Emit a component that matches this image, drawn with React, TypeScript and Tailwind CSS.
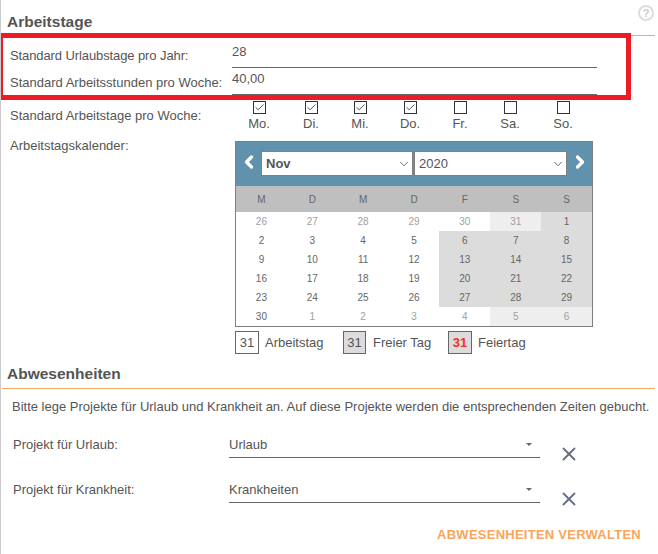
import { ChevronDown, ChevronLeft, ChevronRight, Check, X } from "lucide-react";

const days = [
  { label: "Mo.", checked: true, width: "w-[52px]" },
  { label: "Di.", checked: true, width: "w-[52px]" },
  { label: "Mi.", checked: true, width: "w-[46px]" },
  { label: "Do.", checked: true, width: "w-[54px]" },
  { label: "Fr.", checked: false, width: "w-[46px]" },
  { label: "Sa.", checked: false, width: "w-[54px]" },
  { label: "So.", checked: false, width: "w-[52px]" },
];

const weekHead = ["M", "D", "M", "D", "F", "S", "S"];

const weeks = [
  [26, 27, 28, 29, 30, 31, 1],
  [2, 3, 4, 5, 6, 7, 8],
  [9, 10, 11, 12, 13, 14, 15],
  [16, 17, 18, 19, 20, 21, 22],
  [23, 24, 25, 26, 27, 28, 29],
  [30, 1, 2, 3, 4, 5, 6],
];

function cellClass(week: number, col: number) {
  const outside = week === 0 ? col < 6 : week === 5 && col > 0;
  const weekend = col >= 5 || (col === 4 && !outside);
  let bg = "bg-white";
  if (weekend) bg = outside ? "bg-[#eeeeee]" : "bg-[#dcdcdc]";
  return `${bg} ${outside ? "text-[#a0a0a0]" : "text-[#666666]"}`;
}

function ProjectRow({ label, value }: { label: string; value: string }) {
  return (
    <div className="flex h-[45px] pl-[11px]">
      <div className="w-[216px] pt-[8px] text-[13px] leading-[20px]">{label}</div>
      <div className="relative h-[31px] w-[311px] border-b-[1.5px] border-[#666666] pt-[8px] text-[13px] leading-[20px]">
        {value}
        <span className="absolute right-[8px] top-[16px] h-0 w-0 border-x-[3px] border-t-[3px] border-x-transparent border-t-[#666666]" />
      </div>
      <X className="ml-[18px] mt-[16px] h-[22px] w-[22px] text-[#667080]" strokeWidth={2} />
    </div>
  );
}

export default function App() {
  return (
    <div
      className="relative h-[554px] w-[658px] overflow-hidden border-l border-[#cccccc] bg-white pl-px text-[#555555]"
      style={{ fontFamily: '"Liberation Sans", Arial, sans-serif' }}
    >
      <div className="absolute right-[4px] top-[5px] flex h-[16px] w-[16px] items-center justify-center rounded-full border-2 border-[#dddddd] text-[11px] font-bold leading-none text-[#cccccc]">
        ?
      </div>

      {/* Arbeitstage */}
      <div className="mr-[3px] h-[36px] border-b border-[#f0a860] pl-[5px] pt-[13px]">
        <h2 className="text-[15.5px] font-bold leading-[18px]">Arbeitstage</h2>
      </div>

      <div className="flex h-[32px] pl-[8px]">
        <div className="w-[222px] pt-[10px] text-[13px] leading-[20px] tracking-[-0.1px]">Standard Urlaubstage pro Jahr:</div>
        <div className="h-[32px] w-[365px] border-b border-[#666666] pt-[6px] text-[13px] leading-[20px]">28</div>
      </div>
      <div className="flex h-[27px] pl-[8px]">
        <div className="w-[222px] whitespace-nowrap pt-[5px] text-[13px] leading-[20px]">
          Standard Arbeitsstunden pro Woche:
        </div>
        <div className="h-[27px] w-[365px] border-b border-[#666666] pt-px text-[13px] leading-[20px]">40,00</div>
      </div>

      <div className="flex h-[46px] pl-[8px]">
        <div className="w-[223px] pt-[11px] text-[13px] leading-[20px]">Standard Arbeitstage pro Woche:</div>
        <div className="flex pt-[6px]">
          {days.map((d) => (
            <div key={d.label} className={`flex flex-col items-center ${d.width}`}>
              <div className="flex h-[13px] w-[13px] items-center justify-center border border-[#333333]">
                {d.checked && <Check className="h-[11px] w-[11px] text-[#444444]" strokeWidth={2} />}
              </div>
              <span className="text-[13px] leading-[20px]">{d.label}</span>
            </div>
          ))}
        </div>
      </div>

      <div className="flex pl-[8px]">
        <div className="-mt-[5px] w-[225px] text-[13px] leading-[20px]">Arbeitstagskalender:</div>
        <div>
          <div className="w-[358px] border border-[#7f7f7f]">
            <div className="flex h-[44px] items-start bg-[#6092ae] pl-[3px] pt-[9px]">
              <ChevronLeft className="mt-[1px] h-[20px] w-[20px] shrink-0 text-white" strokeWidth={4} />
              <div className="ml-[2px] flex h-[25px] w-[152px] shrink-0 items-center justify-between border border-[#7f7f7f] bg-white pl-[4px] pr-px text-[13px] font-bold">
                Nov
                <ChevronDown className="h-[14px] w-[14px]" strokeWidth={1.5} />
              </div>
              <div className="ml-px flex h-[25px] w-[153px] shrink-0 items-center justify-between border border-[#7f7f7f] bg-white pl-[4px] pr-px text-[13px]">
                2020
                <ChevronDown className="h-[14px] w-[14px]" strokeWidth={1.5} />
              </div>
              <ChevronRight className="ml-[3px] mt-[1px] h-[20px] w-[20px] shrink-0 text-white" strokeWidth={4} />
            </div>
            <div className="grid h-[26px] grid-cols-7 items-center bg-[#bfbfbf] text-center text-[10px] text-[#666666]">
              {weekHead.map((h, i) => (
                <span key={i}>{h}</span>
              ))}
            </div>
            {weeks.map((week, w) => (
              <div key={w} className="grid h-[19px] grid-cols-7 text-center text-[10px] leading-[19px]">
                {week.map((n, c) => (
                  <div key={c} className={cellClass(w, c)}>
                    {n}
                  </div>
                ))}
              </div>
            ))}
          </div>
          <div className="mt-[4px] flex h-[23px] items-center text-[13px]">
            <div className="flex h-[23px] w-[24px] items-center justify-center border border-[#666666]">31</div>
            <span className="ml-[6px] w-[78px]">Arbeitstag</span>
            <div className="flex h-[23px] w-[23px] items-center justify-center border border-[#666666] bg-[#dcdcdc]">31</div>
            <span className="ml-[7px] w-[75px]">Freier Tag</span>
            <div className="flex h-[23px] w-[24px] items-center justify-center border border-[#666666] bg-[#dcdcdc] font-bold text-[#f03030]">
              31
            </div>
            <span className="ml-[6px]">Feiertag</span>
          </div>
        </div>
      </div>

      {/* Abwesenheiten */}
      <div className="mr-[3px] mt-[9px] h-[26px] border-b border-[#f0a860] pl-[5px]">
        <h2 className="text-[15.5px] font-bold leading-[22px]">Abwesenheiten</h2>
      </div>
      <p className="whitespace-nowrap pl-[10px] pt-[8px] text-[13px] leading-[20px]">
        Bitte lege Projekte für Urlaub und Krankheit an. Auf diese Projekte werden die entsprechenden Zeiten gebucht.
      </p>
      <div className="mt-[10px]">
        <ProjectRow label="Projekt für Urlaub:" value="Urlaub" />
        <ProjectRow label="Projekt für Krankheit:" value="Krankheiten" />
      </div>
      <div className="mt-[8px] pr-[17px] text-right text-[13px] font-bold leading-[20px] tracking-[0.25px] text-[#f9a55b]">
        ABWESENHEITEN VERWALTEN
      </div>

      {/* Markierung */}
      <div className="absolute left-[-1px] top-[33px] h-[67px] w-[631px] border-[5px] border-l-[3px] border-[#ed1c24]" />
    </div>
  );
}
